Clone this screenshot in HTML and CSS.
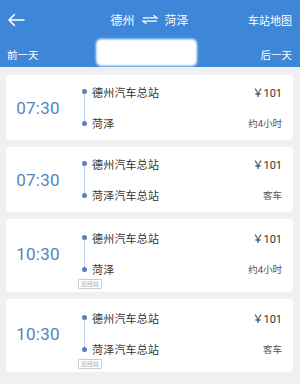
FILE: index.html
```html
<!DOCTYPE html>
<html lang="zh-CN">
<head>
<meta charset="utf-8">
<link rel="stylesheet" href="styles.css">
</head>
<body>
<header class="topbar">
  <div class="bar-row">
    <svg class="back" width="18" height="14" viewBox="0 0 18 14"><path d="M17 7H2M7.5 1.5L2 7l5.5 5.5" fill="none" stroke="#fff" stroke-width="1.6" stroke-linecap="round" stroke-linejoin="round"/></svg>
    <div class="title">
      <span>德州</span>
      <svg class="swap" width="16" height="9" viewBox="0 0 16 9"><path d="M1 2.8H15L11.5 0.3M15 6.2H1L4.5 8.7" fill="none" stroke="#fff" stroke-width="1.2"/></svg>
      <span>菏泽</span>
    </div>
    <span class="map">车站地图</span>
  </div>
  <div class="bar-row sub">
    <span class="day">前一天</span>
    <div class="date"></div>
    <span class="day">后一天</span>
  </div>
</header>
<main class="list">
  <div class="card">
    <div class="time">07:30</div>
    <div class="rail"><i class="dot"></i><i class="line"></i><i class="dot"></i></div>
    <div class="stn r1">德州汽车总站</div>
    <div class="price r1">￥101</div>
    <div class="stn r3">菏泽</div>
    <div class="meta r3">约4小时</div>
  </div>
  <div class="card">
    <div class="time">07:30</div>
    <div class="rail"><i class="dot"></i><i class="line"></i><i class="dot"></i></div>
    <div class="stn r1">德州汽车总站</div>
    <div class="price r1">￥101</div>
    <div class="stn r3">菏泽汽车总站</div>
    <div class="meta r3">客车</div>
  </div>
  <div class="card tagged">
    <div class="time">10:30</div>
    <div class="rail"><i class="dot"></i><i class="line"></i><i class="dot"></i></div>
    <div class="stn r1">德州汽车总站</div>
    <div class="price r1">￥101</div>
    <div class="stn r3">菏泽</div>
    <div class="meta r3">约4小时</div>
    <div class="tag">途经站</div>
  </div>
  <div class="card tagged">
    <div class="time">10:30</div>
    <div class="rail"><i class="dot"></i><i class="line"></i><i class="dot"></i></div>
    <div class="stn r1">德州汽车总站</div>
    <div class="price r1">￥101</div>
    <div class="stn r3">菏泽汽车总站</div>
    <div class="meta r3">客车</div>
    <div class="tag">途经站</div>
  </div>
</main>
</body>
</html>
```
FILE: styles.css
```css
* { box-sizing: border-box; }
html, body { margin: 0; padding: 0; }
body {
  width: 300px;
  height: 384px;
  overflow: hidden;
  background: #eff0f2;
  font-family: Roboto, "Noto Sans CJK SC", sans-serif;
  color: #333;
}
.topbar {
  background: #3d86d8;
  color: #fff;
  height: 67px;
}
.bar-row {
  display: flex;
  align-items: center;
  justify-content: space-between;
  height: 39px;
  padding: 0 8px 0 7px;
}
.back { display: block; }
.title {
  display: flex;
  align-items: center;
  gap: 7px;
  font-size: 12px;
  margin-left: 26px;
}
.swap { display: block; }
.map { font-size: 11px; }
.bar-row.sub {
  height: 28px;
  align-items: flex-start;
}
.day { font-size: 10.5px; margin-top: 8px; }
.date {
  width: 101px;
  height: 27px;
  margin-top: 0;
  margin-left: -6px;
  background: #fff;
  border-radius: 5px;
  filter: blur(1px);
}
.list {
  display: flex;
  flex-direction: column;
  gap: 7px;
  padding: 8px 7px 0 6px;
}
.card {
  background: #fff;
  border-radius: 3px;
  box-shadow: 0 0 1px rgba(0,0,0,0.06);
  display: grid;
  grid-template-columns: 71px 14px 1fr auto;
  grid-template-rows: 16px 15px 16px;
  align-items: center;
  padding: 9px 11px 9px 0;
}
.card.tagged {
  grid-template-rows: 16px 15px 16px 10px;
  padding: 11px 11px 5px 0;
}
.time {
  grid-column: 1;
  grid-row: 1 / 4;
  justify-self: center;
  padding-right: 7px;
  font-size: 17px;
  color: #5483b8;
  letter-spacing: 0.2px;
}
.rail {
  grid-column: 2;
  grid-row: 1 / 4;
  align-self: stretch;
  display: flex;
  flex-direction: column;
  align-items: center;
  padding: 5px 0;
}
.dot {
  width: 5px;
  height: 5px;
  border-radius: 50%;
  background: #5b80b8;
  flex: none;
}
.line {
  flex: 1;
  width: 1px;
  background: #b9cde6;
}
.stn {
  grid-column: 3;
  font-size: 11px;
  letter-spacing: 0.2px;
  color: #333;
  padding-left: 1px;
}
.r1 { grid-row: 1; }
.r3 { grid-row: 3; }
.price {
  grid-column: 4;
  justify-self: end;
  font-size: 11px;
  color: #333;
}
.meta {
  grid-column: 4;
  justify-self: end;
  font-size: 9.5px;
  color: #555;
}
.tag {
  grid-column: 2 / 4;
  grid-row: 4;
  justify-self: start;
  margin-left: 1px;
  margin-top: 3px;
  font-size: 6px;
  line-height: 8px;
  padding: 0 2px;
  color: #aaa;
  border: 1px solid #ccc;
  border-radius: 1px;
}
```
